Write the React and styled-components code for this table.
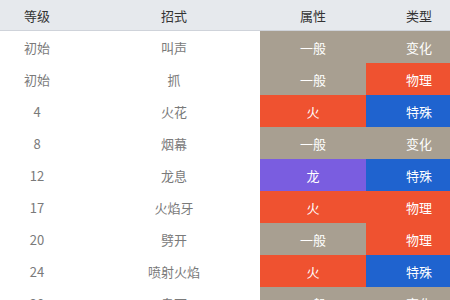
import styled, { createGlobalStyle } from "styled-components";

const GlobalStyle = createGlobalStyle`
  body {
    margin: 0;
    background: #ffffff;
    font-family: "Noto Sans CJK SC", "Noto Sans", sans-serif;
    overflow: hidden;
  }
`;

const TYPE_COLORS = {
  一般: "#a89f91",
  火: "#ef5230",
  龙: "#7a5de0",
};

const CATEGORY_COLORS = {
  变化: "#a89f91",
  物理: "#ef5230",
  特殊: "#1f63cf",
};

const moves = [
  { level: "初始", name: "叫声", type: "一般", category: "变化" },
  { level: "初始", name: "抓", type: "一般", category: "物理" },
  { level: "4", name: "火花", type: "火", category: "特殊" },
  { level: "8", name: "烟幕", type: "一般", category: "变化" },
  { level: "12", name: "龙息", type: "龙", category: "特殊" },
  { level: "17", name: "火焰牙", type: "火", category: "物理" },
  { level: "20", name: "劈开", type: "一般", category: "物理" },
  { level: "24", name: "喷射火焰", type: "火", category: "特殊" },
  { level: "28", name: "鬼面", type: "一般", category: "变化" },
];

const Table = styled.div`
  width: 450px;
  height: 300px;
  overflow: hidden;
`;

const Row = styled.div`
  display: grid;
  grid-template-columns: 74px 186px 106px 106px;
  height: ${(p) => (p.head ? "30px" : "32px")};
  background: ${(p) => (p.head ? "#e6e9ed" : "transparent")};
  border-bottom: ${(p) => (p.head ? "1px solid #cfd3da" : "none")};
`;

const Cell = styled.div`
  display: flex;
  align-items: center;
  justify-content: center;
  font-size: 13px;
  padding-left: ${(p) => (p.shift ? "14px" : "0")};
  color: ${(p) => (p.bg ? "#ffffff" : p.head ? "#333333" : "#7a7a7a")};
  background: ${(p) => p.bg || "transparent"};
`;

export default function App() {
  return (
    <>
      <GlobalStyle />
      <Table>
        <Row head>
          <Cell head>等级</Cell>
          <Cell head shift>
            招式
          </Cell>
          <Cell head>属性</Cell>
          <Cell head>类型</Cell>
        </Row>
        {moves.map((m) => (
          <Row key={m.name}>
            <Cell>{m.level}</Cell>
            <Cell shift>{m.name}</Cell>
            <Cell bg={TYPE_COLORS[m.type]}>{m.type}</Cell>
            <Cell bg={CATEGORY_COLORS[m.category]}>{m.category}</Cell>
          </Row>
        ))}
      </Table>
    </>
  );
}
